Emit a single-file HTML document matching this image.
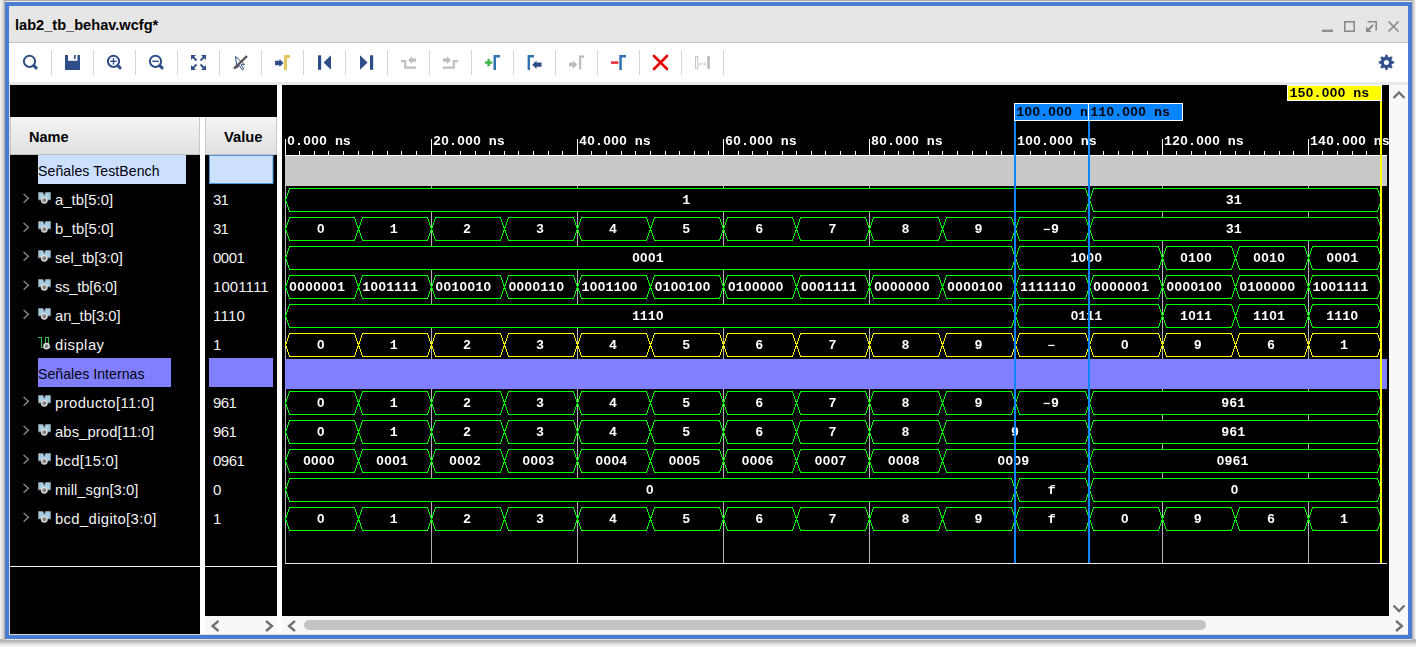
<!DOCTYPE html><html><head><meta charset="utf-8"><style>html,body{margin:0;padding:0;overflow:hidden;background:#fff}svg{display:block}text{white-space:pre}</style></head><body><svg width="1416" height="647" viewBox="0 0 1416 647"><rect x="0" y="0" width="1416" height="647" fill="#ffffff"/>
<defs><linearGradient id="shL" x1="0" x2="1" y1="0" y2="0"><stop offset="0" stop-color="#f2f2f2"/><stop offset="0.45" stop-color="#e0e0e0"/><stop offset="1" stop-color="#bcbcbc"/></linearGradient><linearGradient id="shR" x1="0" x2="1" y1="0" y2="0"><stop offset="0" stop-color="#a8a8a8"/><stop offset="0.5" stop-color="#d8d8d8"/><stop offset="1" stop-color="#f8f8f8"/></linearGradient><linearGradient id="shB" x1="0" x2="0" y1="0" y2="1"><stop offset="0" stop-color="#bcbcbc"/><stop offset="0.25" stop-color="#b0b0b0"/><stop offset="0.6" stop-color="#dedede"/><stop offset="1" stop-color="#f8f8f8"/></linearGradient><filter id="gs" x="-0.05" y="-0.05" width="1.1" height="1.1"><feOffset dx="0" dy="0"/></filter><linearGradient id="hdr" x1="0" x2="0" y1="0" y2="1"><stop offset="0" stop-color="#f4f4f4"/><stop offset="1" stop-color="#e0e0e0"/></linearGradient></defs>
<rect x="0" y="0" width="5" height="641" fill="url(#shL)"/>
<rect x="4" y="0" width="1410" height="1" fill="#a8a8a8"/>
<rect x="4" y="1" width="1408" height="1" fill="#f0ede6"/>
<rect x="4" y="1" width="1" height="639" fill="#b4b0a6"/>
<rect x="1412" y="0" width="4" height="641" fill="url(#shR)"/>
<rect x="0" y="639" width="1416" height="8" fill="url(#shB)"/>
<rect x="5" y="639" width="1407" height="1" fill="#e8e4dc"/>
<rect x="5" y="2" width="1407" height="637" fill="#4a7dd1"/>
<rect x="9" y="6" width="1399" height="629" fill="#e8e8e8"/>
<rect x="9" y="6" width="1399" height="36" fill="#e6e6e6"/>
<rect x="9" y="42" width="1399" height="1" fill="#c2c2c2"/>
<text x="15" y="30" font-family="Liberation Sans" font-weight="bold" font-size="14.6" fill="#000">lab2_tb_behav.wcfg*</text>
<g stroke="#8a8a8a" fill="none" stroke-width="1.6"><line x1="1322" y1="30.8" x2="1333" y2="30.8" stroke-width="2.2"/><rect x="1344.8" y="21.8" width="9.4" height="9.4"/><polyline points="1367.5,21.8 1376.2,21.8 1376.2,30.6"/><line x1="1373" y1="25" x2="1367.5" y2="30.5" stroke-width="2"/><line x1="1388.5" y1="21.5" x2="1398.5" y2="31.5"/><line x1="1398.5" y1="21.5" x2="1388.5" y2="31.5"/></g><polygon points="1366,32 1366,26.5 1371.5,32" fill="#8a8a8a"/>
<rect x="9" y="43" width="1399" height="39" fill="#ffffff"/>
<rect x="9" y="82" width="1399" height="3" fill="#e9e9e9"/>
<rect x="51" y="50" width="1" height="25" fill="#d6d6d6"/>
<rect x="93" y="50" width="1" height="25" fill="#d6d6d6"/>
<rect x="135" y="50" width="1" height="25" fill="#d6d6d6"/>
<rect x="177" y="50" width="1" height="25" fill="#d6d6d6"/>
<rect x="219" y="50" width="1" height="25" fill="#d6d6d6"/>
<rect x="261" y="50" width="1" height="25" fill="#d6d6d6"/>
<rect x="303" y="50" width="1" height="25" fill="#d6d6d6"/>
<rect x="345" y="50" width="1" height="25" fill="#d6d6d6"/>
<rect x="387" y="50" width="1" height="25" fill="#d6d6d6"/>
<rect x="429" y="50" width="1" height="25" fill="#d6d6d6"/>
<rect x="471" y="50" width="1" height="25" fill="#d6d6d6"/>
<rect x="513" y="50" width="1" height="25" fill="#d6d6d6"/>
<rect x="555" y="50" width="1" height="25" fill="#d6d6d6"/>
<rect x="597" y="50" width="1" height="25" fill="#d6d6d6"/>
<rect x="639" y="50" width="1" height="25" fill="#d6d6d6"/>
<rect x="681" y="50" width="1" height="25" fill="#d6d6d6"/>
<rect x="723" y="50" width="1" height="25" fill="#d6d6d6"/>
<g fill="none" stroke="#2f4d88" stroke-width="2"><circle cx="29.5" cy="61.3" r="5.6"/></g><line x1="33.9" y1="65.7" x2="36.1" y2="67.9" stroke="#2f4d88" stroke-width="3" stroke-linecap="round"/>
<path d="M65 55 H80 V70 H65 Z" fill="#2f4d88"/><rect x="68" y="55" width="9.5" height="5.8" fill="#fff"/><rect x="74" y="55" width="1.6" height="4" fill="#2f4d88"/>
<g fill="none" stroke="#2f4d88" stroke-width="2"><circle cx="113.5" cy="61.3" r="5.6"/><line x1="110.3" y1="61.3" x2="116.7" y2="61.3" stroke-width="1.4"/><line x1="113.5" y1="58.1" x2="113.5" y2="64.5" stroke-width="1.4"/></g><line x1="117.9" y1="65.7" x2="120.1" y2="67.9" stroke="#2f4d88" stroke-width="3" stroke-linecap="round"/>
<g fill="none" stroke="#2f4d88" stroke-width="2"><circle cx="155.5" cy="61.3" r="5.6"/><line x1="152.3" y1="61.3" x2="158.7" y2="61.3" stroke-width="1.4"/></g><line x1="159.9" y1="65.7" x2="162.1" y2="67.9" stroke="#2f4d88" stroke-width="3" stroke-linecap="round"/>
<g fill="#2f4d88"><polygon points="191,55 196,55 191,60"/><polygon points="206,55 201,55 206,60"/><polygon points="191,70 196,70 191,65"/><polygon points="206,70 201,70 206,65"/></g><g stroke="#2f4d88" stroke-width="1.8"><line x1="193" y1="57" x2="196.5" y2="60.5"/><line x1="204" y1="57" x2="200.5" y2="60.5"/><line x1="193" y1="68" x2="196.5" y2="64.5"/><line x1="204" y1="68" x2="200.5" y2="64.5"/></g>
<path d="M235.5 56.5 L244.5 64.5 L241 64.8 L243.8 68.8 L242 69.6 L239.4 65.6 L237 68 Z" fill="none" stroke="#2f4d88" stroke-width="1"/><line x1="234" y1="68.6" x2="247" y2="56" stroke="#555555" stroke-width="2.4"/>
<polygon points="275,60.8 279.5,60.8 279.5,59 283.5,63 279.5,67 279.5,65.2 275,65.2" fill="#2f4d88"/><path d="M284 70 V55 H290 V58 H287 V70 Z" fill="#e6c65c"/>
<rect x="318" y="55.3" width="3.2" height="14.5" fill="#2f4d88"/><polygon points="331,55.3 331,69.8 323.6,62.5" fill="#2f4d88"/>
<polygon points="360,55.3 360,69.8 367.6,62.5" fill="#2f4d88"/><rect x="370" y="55.3" width="3.2" height="14.5" fill="#2f4d88"/>
<path d="M401 60 H406.3 V66.5 H416 V68.8 H404.2 V62.3 H401 Z" fill="#bdbdbd"/><polygon points="408,60.2 412,56.4 412,58.6 416,58.6 416,61.8 412,61.8 412,64" fill="#bdbdbd"/>
<path d="M458 60 H452.7 V66.5 H443 V68.8 H454.8 V62.3 H458 Z" fill="#bdbdbd"/><polygon points="451,60.2 447,56.4 447,58.6 443,58.6 443,61.8 447,61.8 447,64" fill="#bdbdbd"/>
<rect x="484.9" y="61.4" width="7.4" height="2.4" fill="#3cb44a"/><rect x="487.4" y="58.9" width="2.4" height="7.4" fill="#3cb44a"/><path d="M493.5 70 V55 H500 V57.5 H496 V70 Z" fill="#2f72b0"/>
<path d="M527.6 70 V55 H534 V57.5 H530 V70 Z" fill="#2f72b0"/><polygon points="532.3,64.7 536.5,60.4 536.5,62.6 541.5,62.6 541.5,66.8 536.5,66.8 536.5,69" fill="#2f4d88"/>
<polygon points="569,62.6 573,62.6 573,60.4 577.2,64.6 573,68.8 573,66.6 569,66.6" fill="#bdbdbd"/><path d="M579 69.5 V55.4 H584 V57.8 H581.2 V69.5 Z" fill="#bdbdbd"/>
<rect x="611" y="61.4" width="7.4" height="2.4" fill="#e8262b"/><path d="M619.3 70 V55 H626 V57.5 H621.8 V70 Z" fill="#2f72b0"/>
<g stroke="#e60000" stroke-width="2.6" stroke-linecap="round"><line x1="654" y1="56" x2="667" y2="69"/><line x1="667" y1="56" x2="654" y2="69"/></g>
<rect x="695.5" y="56.4" width="2.2" height="12" fill="none" stroke="#c4c4c4" stroke-width="1"/><rect x="707.2" y="56" width="2.7" height="12.8" fill="#bdbdbd"/><line x1="699" y1="64" x2="706" y2="64" stroke="#cfcfcf" stroke-width="1"/><polyline points="700.8,62.2 699,64 700.8,65.8" fill="none" stroke="#cfcfcf" stroke-width="1"/><polyline points="704.2,62.2 706,64 704.2,65.8" fill="none" stroke="#cfcfcf" stroke-width="1"/>
<polygon points="1384.69,57.72 1385.78,54.93 1387.12,54.93 1388.21,57.72 1388.48,57.50 1388.51,57.85 1391.26,56.64 1392.21,57.59 1391.00,60.34 1391.35,60.37 1391.13,60.64 1393.92,61.73 1393.92,63.07 1391.13,64.16 1391.35,64.43 1391.00,64.46 1392.21,67.21 1391.26,68.16 1388.51,66.95 1388.48,67.30 1388.21,67.08 1387.12,69.87 1385.78,69.87 1384.69,67.08 1384.42,67.30 1384.39,66.95 1381.64,68.16 1380.69,67.21 1381.90,64.46 1381.55,64.43 1381.77,64.16 1378.98,63.07 1378.98,61.73 1381.77,60.64 1381.55,60.37 1381.90,60.34 1380.69,57.59 1381.64,56.64 1384.39,57.85 1384.42,57.50" fill="#2f4d88" stroke="#2f4d88" stroke-width="0.6" stroke-linejoin="round"/><circle cx="1386.45" cy="62.4" r="2.5" fill="#fff"/>
<rect x="9" y="85" width="1" height="550" fill="#dcdcdc"/>
<rect x="10" y="85" width="267" height="549" fill="#000"/>
<rect x="9" y="634" width="1399" height="1" fill="#dcdcdc"/>
<rect x="200" y="117" width="5" height="517" fill="#fff"/>
<rect x="277" y="85" width="5" height="549" fill="#fff"/>
<rect x="10" y="117" width="190" height="38" fill="url(#hdr)"/><rect x="199" y="117" width="1" height="38" fill="#c8c8c8"/><rect x="10" y="117" width="1" height="38" fill="#c4c4c4"/>
<rect x="205" y="117" width="72" height="38" fill="url(#hdr)"/><rect x="205" y="117" width="1" height="38" fill="#c8c8c8"/><rect x="276" y="117" width="1" height="38" fill="#c8c8c8"/>
<rect x="10" y="154" width="190" height="1" fill="#c0c0c0"/><rect x="205" y="154" width="72" height="1" fill="#c0c0c0"/>
<text x="29" y="142" font-family="Liberation Sans" font-weight="bold" font-size="15" fill="#000" textLength="39.6" lengthAdjust="spacingAndGlyphs">Name</text>
<text x="224" y="142" font-family="Liberation Sans" font-weight="bold" font-size="15" fill="#000" textLength="38.6" lengthAdjust="spacingAndGlyphs">Value</text>
<rect x="38" y="155" width="148" height="29" fill="#cce0fb"/>
<rect x="209.5" y="155.5" width="63.5" height="28" fill="#cce0fb" stroke="#4b98e0" stroke-width="1"/>
<text x="38" y="175.8" font-family="Liberation Sans" font-size="14.1" fill="#000010" textLength="121.5" lengthAdjust="spacing">Señales TestBench</text>
<polyline points="23.6,193.9 28.4,198.3 23.6,202.7" fill="none" stroke="#8c8c8c" stroke-width="1.3"/>
<path d="M38.6 192.6 H43 L44.3 196 L45.6 192.6 H50.4 V199.8 H38.6 Z" fill="#a3cde3" stroke="#8c98a0" stroke-width="0.9"/>
<circle cx="44.3" cy="200.2" r="2.7" fill="#808080" stroke="#d8d8d8" stroke-width="1.5"/>
<text x="55" y="204.8" font-family="Liberation Sans" font-size="14.8" fill="#f2f2f2" textLength="58.2" lengthAdjust="spacing">a_tb[5:0]</text>
<text x="213" y="204.8" font-family="Liberation Sans" font-size="15" fill="#f2f2f2" textLength="15.9" lengthAdjust="spacing">31</text>
<polyline points="23.6,222.9 28.4,227.3 23.6,231.7" fill="none" stroke="#8c8c8c" stroke-width="1.3"/>
<path d="M38.6 221.6 H43 L44.3 225 L45.6 221.6 H50.4 V228.8 H38.6 Z" fill="#a3cde3" stroke="#8c98a0" stroke-width="0.9"/>
<circle cx="44.3" cy="229.2" r="2.7" fill="#808080" stroke="#d8d8d8" stroke-width="1.5"/>
<text x="55" y="233.8" font-family="Liberation Sans" font-size="14.8" fill="#f2f2f2" textLength="58.7" lengthAdjust="spacing">b_tb[5:0]</text>
<text x="213" y="233.8" font-family="Liberation Sans" font-size="15" fill="#f2f2f2" textLength="15.9" lengthAdjust="spacing">31</text>
<polyline points="23.6,251.9 28.4,256.3 23.6,260.7" fill="none" stroke="#8c8c8c" stroke-width="1.3"/>
<path d="M38.6 250.6 H43 L44.3 254 L45.6 250.6 H50.4 V257.8 H38.6 Z" fill="#a3cde3" stroke="#8c98a0" stroke-width="0.9"/>
<circle cx="44.3" cy="258.2" r="2.7" fill="#808080" stroke="#d8d8d8" stroke-width="1.5"/>
<text x="55" y="262.8" font-family="Liberation Sans" font-size="14.8" fill="#f2f2f2" textLength="67.8" lengthAdjust="spacing">sel_tb[3:0]</text>
<text x="213" y="262.8" font-family="Liberation Sans" font-size="15" fill="#f2f2f2" textLength="31.8" lengthAdjust="spacing">0001</text>
<polyline points="23.6,280.9 28.4,285.3 23.6,289.7" fill="none" stroke="#8c8c8c" stroke-width="1.3"/>
<path d="M38.6 279.6 H43 L44.3 283 L45.6 279.6 H50.4 V286.8 H38.6 Z" fill="#a3cde3" stroke="#8c98a0" stroke-width="0.9"/>
<circle cx="44.3" cy="287.2" r="2.7" fill="#808080" stroke="#d8d8d8" stroke-width="1.5"/>
<text x="55" y="291.8" font-family="Liberation Sans" font-size="14.8" fill="#f2f2f2" textLength="62.2" lengthAdjust="spacing">ss_tb[6:0]</text>
<text x="213" y="291.8" font-family="Liberation Sans" font-size="15" fill="#f2f2f2" textLength="55.6" lengthAdjust="spacing">1001111</text>
<polyline points="23.6,309.9 28.4,314.3 23.6,318.7" fill="none" stroke="#8c8c8c" stroke-width="1.3"/>
<path d="M38.6 308.6 H43 L44.3 312 L45.6 308.6 H50.4 V315.8 H38.6 Z" fill="#a3cde3" stroke="#8c98a0" stroke-width="0.9"/>
<circle cx="44.3" cy="316.2" r="2.7" fill="#808080" stroke="#d8d8d8" stroke-width="1.5"/>
<text x="55" y="320.8" font-family="Liberation Sans" font-size="14.8" fill="#f2f2f2" textLength="65.5" lengthAdjust="spacing">an_tb[3:0]</text>
<text x="213" y="320.8" font-family="Liberation Sans" font-size="15" fill="#f2f2f2" textLength="31.8" lengthAdjust="spacing">1110</text>
<polyline points="38,337.5 41.5,337.5 41.5,347.5 45.5,347.5 45.5,337.5 48.5,337.5 48.5,347.5 50.5,347.5" fill="none" stroke="#3cb44b" stroke-width="1.1"/>
<circle cx="46.5" cy="346.1" r="2.6" fill="#808080" stroke="#d8d8d8" stroke-width="1.5"/>
<text x="55" y="349.8" font-family="Liberation Sans" font-size="14.8" fill="#f2f2f2" textLength="49" lengthAdjust="spacing">display</text>
<text x="213" y="349.8" font-family="Liberation Sans" font-size="15" fill="#f2f2f2" textLength="8.0" lengthAdjust="spacing">1</text>
<rect x="38" y="358" width="133" height="29" fill="#8080ff"/>
<rect x="209" y="358" width="64" height="29" fill="#8080ff"/>
<text x="38" y="378.8" font-family="Liberation Sans" font-size="14.1" fill="#000010" textLength="106.5" lengthAdjust="spacing">Señales Internas</text>
<polyline points="23.6,396.9 28.4,401.3 23.6,405.7" fill="none" stroke="#8c8c8c" stroke-width="1.3"/>
<path d="M38.6 395.6 H43 L44.3 399 L45.6 395.6 H50.4 V402.8 H38.6 Z" fill="#a3cde3" stroke="#8c98a0" stroke-width="0.9"/>
<circle cx="44.3" cy="403.2" r="2.7" fill="#808080" stroke="#d8d8d8" stroke-width="1.5"/>
<text x="55" y="407.8" font-family="Liberation Sans" font-size="14.8" fill="#f2f2f2" textLength="99" lengthAdjust="spacing">producto[11:0]</text>
<text x="213" y="407.8" font-family="Liberation Sans" font-size="15" fill="#f2f2f2" textLength="23.9" lengthAdjust="spacing">961</text>
<polyline points="23.6,425.9 28.4,430.3 23.6,434.7" fill="none" stroke="#8c8c8c" stroke-width="1.3"/>
<path d="M38.6 424.6 H43 L44.3 428 L45.6 424.6 H50.4 V431.8 H38.6 Z" fill="#a3cde3" stroke="#8c98a0" stroke-width="0.9"/>
<circle cx="44.3" cy="432.2" r="2.7" fill="#808080" stroke="#d8d8d8" stroke-width="1.5"/>
<text x="55" y="436.8" font-family="Liberation Sans" font-size="14.8" fill="#f2f2f2" textLength="99" lengthAdjust="spacing">abs_prod[11:0]</text>
<text x="213" y="436.8" font-family="Liberation Sans" font-size="15" fill="#f2f2f2" textLength="23.9" lengthAdjust="spacing">961</text>
<polyline points="23.6,454.9 28.4,459.3 23.6,463.7" fill="none" stroke="#8c8c8c" stroke-width="1.3"/>
<path d="M38.6 453.6 H43 L44.3 457 L45.6 453.6 H50.4 V460.8 H38.6 Z" fill="#a3cde3" stroke="#8c98a0" stroke-width="0.9"/>
<circle cx="44.3" cy="461.2" r="2.7" fill="#808080" stroke="#d8d8d8" stroke-width="1.5"/>
<text x="55" y="465.8" font-family="Liberation Sans" font-size="14.8" fill="#f2f2f2" textLength="63.2" lengthAdjust="spacing">bcd[15:0]</text>
<text x="213" y="465.8" font-family="Liberation Sans" font-size="15" fill="#f2f2f2" textLength="31.8" lengthAdjust="spacing">0961</text>
<polyline points="23.6,483.9 28.4,488.3 23.6,492.7" fill="none" stroke="#8c8c8c" stroke-width="1.3"/>
<path d="M38.6 482.6 H43 L44.3 486 L45.6 482.6 H50.4 V489.8 H38.6 Z" fill="#a3cde3" stroke="#8c98a0" stroke-width="0.9"/>
<circle cx="44.3" cy="490.2" r="2.7" fill="#808080" stroke="#d8d8d8" stroke-width="1.5"/>
<text x="55" y="494.8" font-family="Liberation Sans" font-size="14.8" fill="#f2f2f2" textLength="83.4" lengthAdjust="spacing">mill_sgn[3:0]</text>
<text x="213" y="494.8" font-family="Liberation Sans" font-size="15" fill="#f2f2f2" textLength="8.0" lengthAdjust="spacing">0</text>
<polyline points="23.6,512.9 28.4,517.3 23.6,521.7" fill="none" stroke="#8c8c8c" stroke-width="1.3"/>
<path d="M38.6 511.6 H43 L44.3 515 L45.6 511.6 H50.4 V518.8 H38.6 Z" fill="#a3cde3" stroke="#8c98a0" stroke-width="0.9"/>
<circle cx="44.3" cy="519.2" r="2.7" fill="#808080" stroke="#d8d8d8" stroke-width="1.5"/>
<text x="55" y="523.8" font-family="Liberation Sans" font-size="14.8" fill="#f2f2f2" textLength="101.4" lengthAdjust="spacing">bcd_digito[3:0]</text>
<text x="213" y="523.8" font-family="Liberation Sans" font-size="15" fill="#f2f2f2" textLength="8.0" lengthAdjust="spacing">1</text>
<rect x="10" y="566" width="190" height="1" fill="#f0f0f0"/><rect x="205" y="566" width="72" height="1" fill="#f0f0f0"/>
<rect x="205" y="616" width="72" height="18" fill="#f8f8f8"/>
<polyline points="218.5,621 212.5,626 218.5,631" fill="none" stroke="#707070" stroke-width="2.3"/>
<polyline points="266,621 272,626 266,631" fill="none" stroke="#707070" stroke-width="2.3"/>
<rect x="282" y="85" width="1107" height="531" fill="#000"/>
<rect x="282" y="616" width="1126" height="18" fill="#f8f8f8"/>
<rect x="1389" y="85" width="19" height="531" fill="#f8f8f8"/>
<polyline points="295,621 289,626 295,631" fill="none" stroke="#707070" stroke-width="2.3"/>
<polyline points="1396,621 1402,626 1396,631" fill="none" stroke="#707070" stroke-width="2.3"/>
<rect x="304" y="620" width="902" height="10" rx="5" fill="#c4c4c4"/>
<polyline points="1393.5,98 1399,92.5 1404.5,98" fill="none" stroke="#707070" stroke-width="2.3"/>
<polyline points="1393.5,605.5 1399,611 1404.5,605.5" fill="none" stroke="#707070" stroke-width="2.3"/>
<svg x="282" y="85" width="1107" height="531" viewBox="282 85 1107 531" overflow="hidden"><rect x="285" y="156" width="1" height="407" fill="#b4b4b4"/><rect x="431" y="156" width="1" height="407" fill="#b4b4b4"/><rect x="577" y="156" width="1" height="407" fill="#b4b4b4"/><rect x="723" y="156" width="1" height="407" fill="#b4b4b4"/><rect x="869" y="156" width="1" height="407" fill="#b4b4b4"/><rect x="1015" y="156" width="1" height="407" fill="#b4b4b4"/><rect x="1162" y="156" width="1" height="407" fill="#b4b4b4"/><rect x="1308" y="156" width="1" height="407" fill="#b4b4b4"/><rect x="285" y="156" width="1102" height="30" fill="#c8c8c8"/><rect x="285" y="359" width="1102" height="30" fill="#8080ff"/><rect x="285" y="155" width="1102" height="1" fill="#fff"/><rect x="285" y="139" width="1" height="16" fill="#fff"/><rect x="299" y="151" width="1" height="4" fill="#fff"/><rect x="314" y="151" width="1" height="4" fill="#fff"/><rect x="328" y="151" width="1" height="4" fill="#fff"/><rect x="343" y="151" width="1" height="4" fill="#fff"/><rect x="358" y="151" width="1" height="4" fill="#fff"/><rect x="372" y="151" width="1" height="4" fill="#fff"/><rect x="387" y="151" width="1" height="4" fill="#fff"/><rect x="401" y="151" width="1" height="4" fill="#fff"/><rect x="416" y="151" width="1" height="4" fill="#fff"/><rect x="431" y="139" width="1" height="16" fill="#fff"/><rect x="445" y="151" width="1" height="4" fill="#fff"/><rect x="460" y="151" width="1" height="4" fill="#fff"/><rect x="475" y="151" width="1" height="4" fill="#fff"/><rect x="489" y="151" width="1" height="4" fill="#fff"/><rect x="504" y="151" width="1" height="4" fill="#fff"/><rect x="518" y="151" width="1" height="4" fill="#fff"/><rect x="533" y="151" width="1" height="4" fill="#fff"/><rect x="548" y="151" width="1" height="4" fill="#fff"/><rect x="562" y="151" width="1" height="4" fill="#fff"/><rect x="577" y="139" width="1" height="16" fill="#fff"/><rect x="591" y="151" width="1" height="4" fill="#fff"/><rect x="606" y="151" width="1" height="4" fill="#fff"/><rect x="621" y="151" width="1" height="4" fill="#fff"/><rect x="635" y="151" width="1" height="4" fill="#fff"/><rect x="650" y="151" width="1" height="4" fill="#fff"/><rect x="665" y="151" width="1" height="4" fill="#fff"/><rect x="679" y="151" width="1" height="4" fill="#fff"/><rect x="694" y="151" width="1" height="4" fill="#fff"/><rect x="708" y="151" width="1" height="4" fill="#fff"/><rect x="723" y="139" width="1" height="16" fill="#fff"/><rect x="738" y="151" width="1" height="4" fill="#fff"/><rect x="752" y="151" width="1" height="4" fill="#fff"/><rect x="767" y="151" width="1" height="4" fill="#fff"/><rect x="782" y="151" width="1" height="4" fill="#fff"/><rect x="796" y="151" width="1" height="4" fill="#fff"/><rect x="811" y="151" width="1" height="4" fill="#fff"/><rect x="825" y="151" width="1" height="4" fill="#fff"/><rect x="840" y="151" width="1" height="4" fill="#fff"/><rect x="855" y="151" width="1" height="4" fill="#fff"/><rect x="869" y="139" width="1" height="16" fill="#fff"/><rect x="884" y="151" width="1" height="4" fill="#fff"/><rect x="898" y="151" width="1" height="4" fill="#fff"/><rect x="913" y="151" width="1" height="4" fill="#fff"/><rect x="928" y="151" width="1" height="4" fill="#fff"/><rect x="942" y="151" width="1" height="4" fill="#fff"/><rect x="957" y="151" width="1" height="4" fill="#fff"/><rect x="972" y="151" width="1" height="4" fill="#fff"/><rect x="986" y="151" width="1" height="4" fill="#fff"/><rect x="1001" y="151" width="1" height="4" fill="#fff"/><rect x="1015" y="139" width="1" height="16" fill="#fff"/><rect x="1030" y="151" width="1" height="4" fill="#fff"/><rect x="1045" y="151" width="1" height="4" fill="#fff"/><rect x="1059" y="151" width="1" height="4" fill="#fff"/><rect x="1074" y="151" width="1" height="4" fill="#fff"/><rect x="1089" y="151" width="1" height="4" fill="#fff"/><rect x="1103" y="151" width="1" height="4" fill="#fff"/><rect x="1118" y="151" width="1" height="4" fill="#fff"/><rect x="1132" y="151" width="1" height="4" fill="#fff"/><rect x="1147" y="151" width="1" height="4" fill="#fff"/><rect x="1162" y="139" width="1" height="16" fill="#fff"/><rect x="1176" y="151" width="1" height="4" fill="#fff"/><rect x="1191" y="151" width="1" height="4" fill="#fff"/><rect x="1205" y="151" width="1" height="4" fill="#fff"/><rect x="1220" y="151" width="1" height="4" fill="#fff"/><rect x="1235" y="151" width="1" height="4" fill="#fff"/><rect x="1249" y="151" width="1" height="4" fill="#fff"/><rect x="1264" y="151" width="1" height="4" fill="#fff"/><rect x="1279" y="151" width="1" height="4" fill="#fff"/><rect x="1293" y="151" width="1" height="4" fill="#fff"/><rect x="1308" y="139" width="1" height="16" fill="#fff"/><rect x="1322" y="151" width="1" height="4" fill="#fff"/><rect x="1337" y="151" width="1" height="4" fill="#fff"/><rect x="1352" y="151" width="1" height="4" fill="#fff"/><rect x="1366" y="151" width="1" height="4" fill="#fff"/><rect x="1381" y="151" width="1" height="4" fill="#fff"/><text x="287" y="145" font-family="Liberation Mono" font-weight="bold" font-size="13.3" filter="url(#gs)" fill="#fff">0.000 ns</text><rect x="290.0" y="140.0" width="2" height="2" fill="#000"/><rect x="306.0" y="140.0" width="2" height="2" fill="#000"/><rect x="314.0" y="140.0" width="2" height="2" fill="#000"/><rect x="322.0" y="140.0" width="2" height="2" fill="#000"/><text x="433" y="145" font-family="Liberation Mono" font-weight="bold" font-size="13.3" filter="url(#gs)" fill="#fff">20.000 ns</text><rect x="444.0" y="140.0" width="2" height="2" fill="#000"/><rect x="460.0" y="140.0" width="2" height="2" fill="#000"/><rect x="468.0" y="140.0" width="2" height="2" fill="#000"/><rect x="476.0" y="140.0" width="2" height="2" fill="#000"/><text x="579" y="145" font-family="Liberation Mono" font-weight="bold" font-size="13.3" filter="url(#gs)" fill="#fff">40.000 ns</text><rect x="590.0" y="140.0" width="2" height="2" fill="#000"/><rect x="606.0" y="140.0" width="2" height="2" fill="#000"/><rect x="614.0" y="140.0" width="2" height="2" fill="#000"/><rect x="622.0" y="140.0" width="2" height="2" fill="#000"/><text x="725" y="145" font-family="Liberation Mono" font-weight="bold" font-size="13.3" filter="url(#gs)" fill="#fff">60.000 ns</text><rect x="736.0" y="140.0" width="2" height="2" fill="#000"/><rect x="752.0" y="140.0" width="2" height="2" fill="#000"/><rect x="760.0" y="140.0" width="2" height="2" fill="#000"/><rect x="768.0" y="140.0" width="2" height="2" fill="#000"/><text x="871" y="145" font-family="Liberation Mono" font-weight="bold" font-size="13.3" filter="url(#gs)" fill="#fff">80.000 ns</text><rect x="882.0" y="140.0" width="2" height="2" fill="#000"/><rect x="898.0" y="140.0" width="2" height="2" fill="#000"/><rect x="906.0" y="140.0" width="2" height="2" fill="#000"/><rect x="914.0" y="140.0" width="2" height="2" fill="#000"/><text x="1017" y="145" font-family="Liberation Mono" font-weight="bold" font-size="13.3" filter="url(#gs)" fill="#fff">100.000 ns</text><rect x="1028.0" y="140.0" width="2" height="2" fill="#000"/><rect x="1036.0" y="140.0" width="2" height="2" fill="#000"/><rect x="1052.0" y="140.0" width="2" height="2" fill="#000"/><rect x="1060.0" y="140.0" width="2" height="2" fill="#000"/><rect x="1068.0" y="140.0" width="2" height="2" fill="#000"/><text x="1164" y="145" font-family="Liberation Mono" font-weight="bold" font-size="13.3" filter="url(#gs)" fill="#fff">120.000 ns</text><rect x="1183.0" y="140.0" width="2" height="2" fill="#000"/><rect x="1199.0" y="140.0" width="2" height="2" fill="#000"/><rect x="1207.0" y="140.0" width="2" height="2" fill="#000"/><rect x="1215.0" y="140.0" width="2" height="2" fill="#000"/><text x="1310" y="145" font-family="Liberation Mono" font-weight="bold" font-size="13.3" filter="url(#gs)" fill="#fff">140.000 ns</text><rect x="1329.0" y="140.0" width="2" height="2" fill="#000"/><rect x="1345.0" y="140.0" width="2" height="2" fill="#000"/><rect x="1353.0" y="140.0" width="2" height="2" fill="#000"/><rect x="1361.0" y="140.0" width="2" height="2" fill="#000"/><path d="M285.5 200.0 L289.5 188.5 L1085.5 188.5 L1089.5 200.0 L1085.5 211.5 L289.5 211.5 Z M1089.5 200.0 L1093.5 188.5 L1377.5 188.5 L1381.5 200.0 L1377.5 211.5 L1093.5 211.5 Z" fill="#000" stroke="#00ff00" stroke-width="1" shape-rendering="crispEdges"/><path d="M285.5 229.0 L289.5 217.5 L354.5 217.5 L358.5 229.0 L354.5 240.5 L289.5 240.5 Z M358.5 229.0 L362.5 217.5 L427.5 217.5 L431.5 229.0 L427.5 240.5 L362.5 240.5 Z M431.5 229.0 L435.5 217.5 L500.5 217.5 L504.5 229.0 L500.5 240.5 L435.5 240.5 Z M504.5 229.0 L508.5 217.5 L573.5 217.5 L577.5 229.0 L573.5 240.5 L508.5 240.5 Z M577.5 229.0 L581.5 217.5 L646.5 217.5 L650.5 229.0 L646.5 240.5 L581.5 240.5 Z M650.5 229.0 L654.5 217.5 L719.5 217.5 L723.5 229.0 L719.5 240.5 L654.5 240.5 Z M723.5 229.0 L727.5 217.5 L792.5 217.5 L796.5 229.0 L792.5 240.5 L727.5 240.5 Z M796.5 229.0 L800.5 217.5 L865.5 217.5 L869.5 229.0 L865.5 240.5 L800.5 240.5 Z M869.5 229.0 L873.5 217.5 L938.5 217.5 L942.5 229.0 L938.5 240.5 L873.5 240.5 Z M942.5 229.0 L946.5 217.5 L1011.5 217.5 L1015.5 229.0 L1011.5 240.5 L946.5 240.5 Z M1015.5 229.0 L1019.5 217.5 L1085.5 217.5 L1089.5 229.0 L1085.5 240.5 L1019.5 240.5 Z M1089.5 229.0 L1093.5 217.5 L1377.5 217.5 L1381.5 229.0 L1377.5 240.5 L1093.5 240.5 Z" fill="#000" stroke="#00ff00" stroke-width="1" shape-rendering="crispEdges"/><path d="M285.5 258.0 L289.5 246.5 L1011.5 246.5 L1015.5 258.0 L1011.5 269.5 L289.5 269.5 Z M1015.5 258.0 L1019.5 246.5 L1158.5 246.5 L1162.5 258.0 L1158.5 269.5 L1019.5 269.5 Z M1162.5 258.0 L1166.5 246.5 L1231.5 246.5 L1235.5 258.0 L1231.5 269.5 L1166.5 269.5 Z M1235.5 258.0 L1239.5 246.5 L1304.5 246.5 L1308.5 258.0 L1304.5 269.5 L1239.5 269.5 Z M1308.5 258.0 L1312.5 246.5 L1377.5 246.5 L1381.5 258.0 L1377.5 269.5 L1312.5 269.5 Z" fill="#000" stroke="#00ff00" stroke-width="1" shape-rendering="crispEdges"/><path d="M285.5 287.0 L289.5 275.5 L354.5 275.5 L358.5 287.0 L354.5 298.5 L289.5 298.5 Z M358.5 287.0 L362.5 275.5 L427.5 275.5 L431.5 287.0 L427.5 298.5 L362.5 298.5 Z M431.5 287.0 L435.5 275.5 L500.5 275.5 L504.5 287.0 L500.5 298.5 L435.5 298.5 Z M504.5 287.0 L508.5 275.5 L573.5 275.5 L577.5 287.0 L573.5 298.5 L508.5 298.5 Z M577.5 287.0 L581.5 275.5 L646.5 275.5 L650.5 287.0 L646.5 298.5 L581.5 298.5 Z M650.5 287.0 L654.5 275.5 L719.5 275.5 L723.5 287.0 L719.5 298.5 L654.5 298.5 Z M723.5 287.0 L727.5 275.5 L792.5 275.5 L796.5 287.0 L792.5 298.5 L727.5 298.5 Z M796.5 287.0 L800.5 275.5 L865.5 275.5 L869.5 287.0 L865.5 298.5 L800.5 298.5 Z M869.5 287.0 L873.5 275.5 L938.5 275.5 L942.5 287.0 L938.5 298.5 L873.5 298.5 Z M942.5 287.0 L946.5 275.5 L1011.5 275.5 L1015.5 287.0 L1011.5 298.5 L946.5 298.5 Z M1015.5 287.0 L1019.5 275.5 L1085.5 275.5 L1089.5 287.0 L1085.5 298.5 L1019.5 298.5 Z M1089.5 287.0 L1093.5 275.5 L1158.5 275.5 L1162.5 287.0 L1158.5 298.5 L1093.5 298.5 Z M1162.5 287.0 L1166.5 275.5 L1231.5 275.5 L1235.5 287.0 L1231.5 298.5 L1166.5 298.5 Z M1235.5 287.0 L1239.5 275.5 L1304.5 275.5 L1308.5 287.0 L1304.5 298.5 L1239.5 298.5 Z M1308.5 287.0 L1312.5 275.5 L1377.5 275.5 L1381.5 287.0 L1377.5 298.5 L1312.5 298.5 Z" fill="#000" stroke="#00ff00" stroke-width="1" shape-rendering="crispEdges"/><path d="M285.5 316.0 L289.5 304.5 L1011.5 304.5 L1015.5 316.0 L1011.5 327.5 L289.5 327.5 Z M1015.5 316.0 L1019.5 304.5 L1158.5 304.5 L1162.5 316.0 L1158.5 327.5 L1019.5 327.5 Z M1162.5 316.0 L1166.5 304.5 L1231.5 304.5 L1235.5 316.0 L1231.5 327.5 L1166.5 327.5 Z M1235.5 316.0 L1239.5 304.5 L1304.5 304.5 L1308.5 316.0 L1304.5 327.5 L1239.5 327.5 Z M1308.5 316.0 L1312.5 304.5 L1377.5 304.5 L1381.5 316.0 L1377.5 327.5 L1312.5 327.5 Z" fill="#000" stroke="#00ff00" stroke-width="1" shape-rendering="crispEdges"/><path d="M285.5 345.0 L289.5 333.5 L354.5 333.5 L358.5 345.0 L354.5 356.5 L289.5 356.5 Z M358.5 345.0 L362.5 333.5 L427.5 333.5 L431.5 345.0 L427.5 356.5 L362.5 356.5 Z M431.5 345.0 L435.5 333.5 L500.5 333.5 L504.5 345.0 L500.5 356.5 L435.5 356.5 Z M504.5 345.0 L508.5 333.5 L573.5 333.5 L577.5 345.0 L573.5 356.5 L508.5 356.5 Z M577.5 345.0 L581.5 333.5 L646.5 333.5 L650.5 345.0 L646.5 356.5 L581.5 356.5 Z M650.5 345.0 L654.5 333.5 L719.5 333.5 L723.5 345.0 L719.5 356.5 L654.5 356.5 Z M723.5 345.0 L727.5 333.5 L792.5 333.5 L796.5 345.0 L792.5 356.5 L727.5 356.5 Z M796.5 345.0 L800.5 333.5 L865.5 333.5 L869.5 345.0 L865.5 356.5 L800.5 356.5 Z M869.5 345.0 L873.5 333.5 L938.5 333.5 L942.5 345.0 L938.5 356.5 L873.5 356.5 Z M942.5 345.0 L946.5 333.5 L1011.5 333.5 L1015.5 345.0 L1011.5 356.5 L946.5 356.5 Z M1015.5 345.0 L1019.5 333.5 L1085.5 333.5 L1089.5 345.0 L1085.5 356.5 L1019.5 356.5 Z M1089.5 345.0 L1093.5 333.5 L1158.5 333.5 L1162.5 345.0 L1158.5 356.5 L1093.5 356.5 Z M1162.5 345.0 L1166.5 333.5 L1231.5 333.5 L1235.5 345.0 L1231.5 356.5 L1166.5 356.5 Z M1235.5 345.0 L1239.5 333.5 L1304.5 333.5 L1308.5 345.0 L1304.5 356.5 L1239.5 356.5 Z M1308.5 345.0 L1312.5 333.5 L1377.5 333.5 L1381.5 345.0 L1377.5 356.5 L1312.5 356.5 Z" fill="#000" stroke="#ffff00" stroke-width="1" shape-rendering="crispEdges"/><path d="M285.5 403.0 L289.5 391.5 L354.5 391.5 L358.5 403.0 L354.5 414.5 L289.5 414.5 Z M358.5 403.0 L362.5 391.5 L427.5 391.5 L431.5 403.0 L427.5 414.5 L362.5 414.5 Z M431.5 403.0 L435.5 391.5 L500.5 391.5 L504.5 403.0 L500.5 414.5 L435.5 414.5 Z M504.5 403.0 L508.5 391.5 L573.5 391.5 L577.5 403.0 L573.5 414.5 L508.5 414.5 Z M577.5 403.0 L581.5 391.5 L646.5 391.5 L650.5 403.0 L646.5 414.5 L581.5 414.5 Z M650.5 403.0 L654.5 391.5 L719.5 391.5 L723.5 403.0 L719.5 414.5 L654.5 414.5 Z M723.5 403.0 L727.5 391.5 L792.5 391.5 L796.5 403.0 L792.5 414.5 L727.5 414.5 Z M796.5 403.0 L800.5 391.5 L865.5 391.5 L869.5 403.0 L865.5 414.5 L800.5 414.5 Z M869.5 403.0 L873.5 391.5 L938.5 391.5 L942.5 403.0 L938.5 414.5 L873.5 414.5 Z M942.5 403.0 L946.5 391.5 L1011.5 391.5 L1015.5 403.0 L1011.5 414.5 L946.5 414.5 Z M1015.5 403.0 L1019.5 391.5 L1085.5 391.5 L1089.5 403.0 L1085.5 414.5 L1019.5 414.5 Z M1089.5 403.0 L1093.5 391.5 L1377.5 391.5 L1381.5 403.0 L1377.5 414.5 L1093.5 414.5 Z" fill="#000" stroke="#00ff00" stroke-width="1" shape-rendering="crispEdges"/><path d="M285.5 432.0 L289.5 420.5 L354.5 420.5 L358.5 432.0 L354.5 443.5 L289.5 443.5 Z M358.5 432.0 L362.5 420.5 L427.5 420.5 L431.5 432.0 L427.5 443.5 L362.5 443.5 Z M431.5 432.0 L435.5 420.5 L500.5 420.5 L504.5 432.0 L500.5 443.5 L435.5 443.5 Z M504.5 432.0 L508.5 420.5 L573.5 420.5 L577.5 432.0 L573.5 443.5 L508.5 443.5 Z M577.5 432.0 L581.5 420.5 L646.5 420.5 L650.5 432.0 L646.5 443.5 L581.5 443.5 Z M650.5 432.0 L654.5 420.5 L719.5 420.5 L723.5 432.0 L719.5 443.5 L654.5 443.5 Z M723.5 432.0 L727.5 420.5 L792.5 420.5 L796.5 432.0 L792.5 443.5 L727.5 443.5 Z M796.5 432.0 L800.5 420.5 L865.5 420.5 L869.5 432.0 L865.5 443.5 L800.5 443.5 Z M869.5 432.0 L873.5 420.5 L938.5 420.5 L942.5 432.0 L938.5 443.5 L873.5 443.5 Z M942.5 432.0 L946.5 420.5 L1085.5 420.5 L1089.5 432.0 L1085.5 443.5 L946.5 443.5 Z M1089.5 432.0 L1093.5 420.5 L1377.5 420.5 L1381.5 432.0 L1377.5 443.5 L1093.5 443.5 Z" fill="#000" stroke="#00ff00" stroke-width="1" shape-rendering="crispEdges"/><path d="M285.5 461.0 L289.5 449.5 L354.5 449.5 L358.5 461.0 L354.5 472.5 L289.5 472.5 Z M358.5 461.0 L362.5 449.5 L427.5 449.5 L431.5 461.0 L427.5 472.5 L362.5 472.5 Z M431.5 461.0 L435.5 449.5 L500.5 449.5 L504.5 461.0 L500.5 472.5 L435.5 472.5 Z M504.5 461.0 L508.5 449.5 L573.5 449.5 L577.5 461.0 L573.5 472.5 L508.5 472.5 Z M577.5 461.0 L581.5 449.5 L646.5 449.5 L650.5 461.0 L646.5 472.5 L581.5 472.5 Z M650.5 461.0 L654.5 449.5 L719.5 449.5 L723.5 461.0 L719.5 472.5 L654.5 472.5 Z M723.5 461.0 L727.5 449.5 L792.5 449.5 L796.5 461.0 L792.5 472.5 L727.5 472.5 Z M796.5 461.0 L800.5 449.5 L865.5 449.5 L869.5 461.0 L865.5 472.5 L800.5 472.5 Z M869.5 461.0 L873.5 449.5 L938.5 449.5 L942.5 461.0 L938.5 472.5 L873.5 472.5 Z M942.5 461.0 L946.5 449.5 L1085.5 449.5 L1089.5 461.0 L1085.5 472.5 L946.5 472.5 Z M1089.5 461.0 L1093.5 449.5 L1377.5 449.5 L1381.5 461.0 L1377.5 472.5 L1093.5 472.5 Z" fill="#000" stroke="#00ff00" stroke-width="1" shape-rendering="crispEdges"/><path d="M285.5 490.0 L289.5 478.5 L1011.5 478.5 L1015.5 490.0 L1011.5 501.5 L289.5 501.5 Z M1015.5 490.0 L1019.5 478.5 L1085.5 478.5 L1089.5 490.0 L1085.5 501.5 L1019.5 501.5 Z M1089.5 490.0 L1093.5 478.5 L1377.5 478.5 L1381.5 490.0 L1377.5 501.5 L1093.5 501.5 Z" fill="#000" stroke="#00ff00" stroke-width="1" shape-rendering="crispEdges"/><path d="M285.5 519.0 L289.5 507.5 L354.5 507.5 L358.5 519.0 L354.5 530.5 L289.5 530.5 Z M358.5 519.0 L362.5 507.5 L427.5 507.5 L431.5 519.0 L427.5 530.5 L362.5 530.5 Z M431.5 519.0 L435.5 507.5 L500.5 507.5 L504.5 519.0 L500.5 530.5 L435.5 530.5 Z M504.5 519.0 L508.5 507.5 L573.5 507.5 L577.5 519.0 L573.5 530.5 L508.5 530.5 Z M577.5 519.0 L581.5 507.5 L646.5 507.5 L650.5 519.0 L646.5 530.5 L581.5 530.5 Z M650.5 519.0 L654.5 507.5 L719.5 507.5 L723.5 519.0 L719.5 530.5 L654.5 530.5 Z M723.5 519.0 L727.5 507.5 L792.5 507.5 L796.5 519.0 L792.5 530.5 L727.5 530.5 Z M796.5 519.0 L800.5 507.5 L865.5 507.5 L869.5 519.0 L865.5 530.5 L800.5 530.5 Z M869.5 519.0 L873.5 507.5 L938.5 507.5 L942.5 519.0 L938.5 530.5 L873.5 530.5 Z M942.5 519.0 L946.5 507.5 L1011.5 507.5 L1015.5 519.0 L1011.5 530.5 L946.5 530.5 Z M1015.5 519.0 L1019.5 507.5 L1085.5 507.5 L1089.5 519.0 L1085.5 530.5 L1019.5 530.5 Z M1089.5 519.0 L1093.5 507.5 L1158.5 507.5 L1162.5 519.0 L1158.5 530.5 L1093.5 530.5 Z M1162.5 519.0 L1166.5 507.5 L1231.5 507.5 L1235.5 519.0 L1231.5 530.5 L1166.5 530.5 Z M1235.5 519.0 L1239.5 507.5 L1304.5 507.5 L1308.5 519.0 L1304.5 530.5 L1239.5 530.5 Z M1308.5 519.0 L1312.5 507.5 L1377.5 507.5 L1381.5 519.0 L1377.5 530.5 L1312.5 530.5 Z" fill="#000" stroke="#00ff00" stroke-width="1" shape-rendering="crispEdges"/><g filter="url(#gs)"><text x="682.2" y="204.0" font-family="Liberation Mono" font-weight="bold" font-size="13.3" fill="#fff">1</text><text x="1225.8" y="204.0" font-family="Liberation Mono" font-weight="bold" font-size="13.3" fill="#fff">31</text><text x="316.7" y="233.0" font-family="Liberation Mono" font-weight="bold" font-size="13.3" fill="#fff">0</text><text x="389.8" y="233.0" font-family="Liberation Mono" font-weight="bold" font-size="13.3" fill="#fff">1</text><text x="462.9" y="233.0" font-family="Liberation Mono" font-weight="bold" font-size="13.3" fill="#fff">2</text><text x="536.0" y="233.0" font-family="Liberation Mono" font-weight="bold" font-size="13.3" fill="#fff">3</text><text x="609.1" y="233.0" font-family="Liberation Mono" font-weight="bold" font-size="13.3" fill="#fff">4</text><text x="682.2" y="233.0" font-family="Liberation Mono" font-weight="bold" font-size="13.3" fill="#fff">5</text><text x="755.3" y="233.0" font-family="Liberation Mono" font-weight="bold" font-size="13.3" fill="#fff">6</text><text x="828.4" y="233.0" font-family="Liberation Mono" font-weight="bold" font-size="13.3" fill="#fff">7</text><text x="901.5" y="233.0" font-family="Liberation Mono" font-weight="bold" font-size="13.3" fill="#fff">8</text><text x="974.6" y="233.0" font-family="Liberation Mono" font-weight="bold" font-size="13.3" fill="#fff">9</text><rect x="1043.7" y="228.8" width="6.2" height="1.3" fill="#fff"/><text x="1043.1" y="233.0" font-family="Liberation Mono" font-weight="bold" font-size="13.3" fill="#fff"> 9</text><text x="1225.8" y="233.0" font-family="Liberation Mono" font-weight="bold" font-size="13.3" fill="#fff">31</text><text x="631.9" y="262.0" font-family="Liberation Mono" font-weight="bold" font-size="13.3" fill="#fff">0001</text><text x="1070.4" y="262.0" font-family="Liberation Mono" font-weight="bold" font-size="13.3" fill="#fff">1000</text><text x="1180.0" y="262.0" font-family="Liberation Mono" font-weight="bold" font-size="13.3" fill="#fff">0100</text><text x="1253.1" y="262.0" font-family="Liberation Mono" font-weight="bold" font-size="13.3" fill="#fff">0010</text><text x="1326.2" y="262.0" font-family="Liberation Mono" font-weight="bold" font-size="13.3" fill="#fff">0001</text><text x="289.1" y="291.0" font-family="Liberation Mono" font-weight="bold" font-size="13.3" fill="#fff">0000001</text><text x="362.2" y="291.0" font-family="Liberation Mono" font-weight="bold" font-size="13.3" fill="#fff">1001111</text><text x="435.3" y="291.0" font-family="Liberation Mono" font-weight="bold" font-size="13.3" fill="#fff">0010010</text><text x="508.4" y="291.0" font-family="Liberation Mono" font-weight="bold" font-size="13.3" fill="#fff">0000110</text><text x="581.5" y="291.0" font-family="Liberation Mono" font-weight="bold" font-size="13.3" fill="#fff">1001100</text><text x="654.6" y="291.0" font-family="Liberation Mono" font-weight="bold" font-size="13.3" fill="#fff">0100100</text><text x="727.7" y="291.0" font-family="Liberation Mono" font-weight="bold" font-size="13.3" fill="#fff">0100000</text><text x="800.8" y="291.0" font-family="Liberation Mono" font-weight="bold" font-size="13.3" fill="#fff">0001111</text><text x="873.9" y="291.0" font-family="Liberation Mono" font-weight="bold" font-size="13.3" fill="#fff">0000000</text><text x="947.0" y="291.0" font-family="Liberation Mono" font-weight="bold" font-size="13.3" fill="#fff">0000100</text><text x="1020.1" y="291.0" font-family="Liberation Mono" font-weight="bold" font-size="13.3" fill="#fff">1111110</text><text x="1093.1" y="291.0" font-family="Liberation Mono" font-weight="bold" font-size="13.3" fill="#fff">0000001</text><text x="1166.2" y="291.0" font-family="Liberation Mono" font-weight="bold" font-size="13.3" fill="#fff">0000100</text><text x="1239.3" y="291.0" font-family="Liberation Mono" font-weight="bold" font-size="13.3" fill="#fff">0100000</text><text x="1312.4" y="291.0" font-family="Liberation Mono" font-weight="bold" font-size="13.3" fill="#fff">1001111</text><text x="631.9" y="320.0" font-family="Liberation Mono" font-weight="bold" font-size="13.3" fill="#fff">1110</text><text x="1070.4" y="320.0" font-family="Liberation Mono" font-weight="bold" font-size="13.3" fill="#fff">0111</text><text x="1180.0" y="320.0" font-family="Liberation Mono" font-weight="bold" font-size="13.3" fill="#fff">1011</text><text x="1253.1" y="320.0" font-family="Liberation Mono" font-weight="bold" font-size="13.3" fill="#fff">1101</text><text x="1326.2" y="320.0" font-family="Liberation Mono" font-weight="bold" font-size="13.3" fill="#fff">1110</text><text x="316.7" y="349.0" font-family="Liberation Mono" font-weight="bold" font-size="13.3" fill="#fff">0</text><text x="389.8" y="349.0" font-family="Liberation Mono" font-weight="bold" font-size="13.3" fill="#fff">1</text><text x="462.9" y="349.0" font-family="Liberation Mono" font-weight="bold" font-size="13.3" fill="#fff">2</text><text x="536.0" y="349.0" font-family="Liberation Mono" font-weight="bold" font-size="13.3" fill="#fff">3</text><text x="609.1" y="349.0" font-family="Liberation Mono" font-weight="bold" font-size="13.3" fill="#fff">4</text><text x="682.2" y="349.0" font-family="Liberation Mono" font-weight="bold" font-size="13.3" fill="#fff">5</text><text x="755.3" y="349.0" font-family="Liberation Mono" font-weight="bold" font-size="13.3" fill="#fff">6</text><text x="828.4" y="349.0" font-family="Liberation Mono" font-weight="bold" font-size="13.3" fill="#fff">7</text><text x="901.5" y="349.0" font-family="Liberation Mono" font-weight="bold" font-size="13.3" fill="#fff">8</text><text x="974.6" y="349.0" font-family="Liberation Mono" font-weight="bold" font-size="13.3" fill="#fff">9</text><rect x="1048.3" y="344.8" width="6.2" height="1.3" fill="#fff"/><text x="1047.7" y="349.0" font-family="Liberation Mono" font-weight="bold" font-size="13.3" fill="#fff"> </text><text x="1120.7" y="349.0" font-family="Liberation Mono" font-weight="bold" font-size="13.3" fill="#fff">0</text><text x="1193.8" y="349.0" font-family="Liberation Mono" font-weight="bold" font-size="13.3" fill="#fff">9</text><text x="1266.9" y="349.0" font-family="Liberation Mono" font-weight="bold" font-size="13.3" fill="#fff">6</text><text x="1340.0" y="349.0" font-family="Liberation Mono" font-weight="bold" font-size="13.3" fill="#fff">1</text><text x="316.7" y="407.0" font-family="Liberation Mono" font-weight="bold" font-size="13.3" fill="#fff">0</text><text x="389.8" y="407.0" font-family="Liberation Mono" font-weight="bold" font-size="13.3" fill="#fff">1</text><text x="462.9" y="407.0" font-family="Liberation Mono" font-weight="bold" font-size="13.3" fill="#fff">2</text><text x="536.0" y="407.0" font-family="Liberation Mono" font-weight="bold" font-size="13.3" fill="#fff">3</text><text x="609.1" y="407.0" font-family="Liberation Mono" font-weight="bold" font-size="13.3" fill="#fff">4</text><text x="682.2" y="407.0" font-family="Liberation Mono" font-weight="bold" font-size="13.3" fill="#fff">5</text><text x="755.3" y="407.0" font-family="Liberation Mono" font-weight="bold" font-size="13.3" fill="#fff">6</text><text x="828.4" y="407.0" font-family="Liberation Mono" font-weight="bold" font-size="13.3" fill="#fff">7</text><text x="901.5" y="407.0" font-family="Liberation Mono" font-weight="bold" font-size="13.3" fill="#fff">8</text><text x="974.6" y="407.0" font-family="Liberation Mono" font-weight="bold" font-size="13.3" fill="#fff">9</text><rect x="1043.7" y="402.8" width="6.2" height="1.3" fill="#fff"/><text x="1043.1" y="407.0" font-family="Liberation Mono" font-weight="bold" font-size="13.3" fill="#fff"> 9</text><text x="1221.2" y="407.0" font-family="Liberation Mono" font-weight="bold" font-size="13.3" fill="#fff">961</text><text x="316.7" y="436.0" font-family="Liberation Mono" font-weight="bold" font-size="13.3" fill="#fff">0</text><text x="389.8" y="436.0" font-family="Liberation Mono" font-weight="bold" font-size="13.3" fill="#fff">1</text><text x="462.9" y="436.0" font-family="Liberation Mono" font-weight="bold" font-size="13.3" fill="#fff">2</text><text x="536.0" y="436.0" font-family="Liberation Mono" font-weight="bold" font-size="13.3" fill="#fff">3</text><text x="609.1" y="436.0" font-family="Liberation Mono" font-weight="bold" font-size="13.3" fill="#fff">4</text><text x="682.2" y="436.0" font-family="Liberation Mono" font-weight="bold" font-size="13.3" fill="#fff">5</text><text x="755.3" y="436.0" font-family="Liberation Mono" font-weight="bold" font-size="13.3" fill="#fff">6</text><text x="828.4" y="436.0" font-family="Liberation Mono" font-weight="bold" font-size="13.3" fill="#fff">7</text><text x="901.5" y="436.0" font-family="Liberation Mono" font-weight="bold" font-size="13.3" fill="#fff">8</text><text x="1011.1" y="436.0" font-family="Liberation Mono" font-weight="bold" font-size="13.3" fill="#fff">9</text><text x="1221.2" y="436.0" font-family="Liberation Mono" font-weight="bold" font-size="13.3" fill="#fff">961</text><text x="302.9" y="465.0" font-family="Liberation Mono" font-weight="bold" font-size="13.3" fill="#fff">0000</text><text x="376.0" y="465.0" font-family="Liberation Mono" font-weight="bold" font-size="13.3" fill="#fff">0001</text><text x="449.1" y="465.0" font-family="Liberation Mono" font-weight="bold" font-size="13.3" fill="#fff">0002</text><text x="522.2" y="465.0" font-family="Liberation Mono" font-weight="bold" font-size="13.3" fill="#fff">0003</text><text x="595.3" y="465.0" font-family="Liberation Mono" font-weight="bold" font-size="13.3" fill="#fff">0004</text><text x="668.4" y="465.0" font-family="Liberation Mono" font-weight="bold" font-size="13.3" fill="#fff">0005</text><text x="741.5" y="465.0" font-family="Liberation Mono" font-weight="bold" font-size="13.3" fill="#fff">0006</text><text x="814.6" y="465.0" font-family="Liberation Mono" font-weight="bold" font-size="13.3" fill="#fff">0007</text><text x="887.7" y="465.0" font-family="Liberation Mono" font-weight="bold" font-size="13.3" fill="#fff">0008</text><text x="997.3" y="465.0" font-family="Liberation Mono" font-weight="bold" font-size="13.3" fill="#fff">0009</text><text x="1216.6" y="465.0" font-family="Liberation Mono" font-weight="bold" font-size="13.3" fill="#fff">0961</text><text x="645.7" y="494.0" font-family="Liberation Mono" font-weight="bold" font-size="13.3" fill="#fff">0</text><text x="1047.7" y="494.0" font-family="Liberation Mono" font-weight="bold" font-size="13.3" fill="#fff">f</text><text x="1230.4" y="494.0" font-family="Liberation Mono" font-weight="bold" font-size="13.3" fill="#fff">0</text><text x="316.7" y="523.0" font-family="Liberation Mono" font-weight="bold" font-size="13.3" fill="#fff">0</text><text x="389.8" y="523.0" font-family="Liberation Mono" font-weight="bold" font-size="13.3" fill="#fff">1</text><text x="462.9" y="523.0" font-family="Liberation Mono" font-weight="bold" font-size="13.3" fill="#fff">2</text><text x="536.0" y="523.0" font-family="Liberation Mono" font-weight="bold" font-size="13.3" fill="#fff">3</text><text x="609.1" y="523.0" font-family="Liberation Mono" font-weight="bold" font-size="13.3" fill="#fff">4</text><text x="682.2" y="523.0" font-family="Liberation Mono" font-weight="bold" font-size="13.3" fill="#fff">5</text><text x="755.3" y="523.0" font-family="Liberation Mono" font-weight="bold" font-size="13.3" fill="#fff">6</text><text x="828.4" y="523.0" font-family="Liberation Mono" font-weight="bold" font-size="13.3" fill="#fff">7</text><text x="901.5" y="523.0" font-family="Liberation Mono" font-weight="bold" font-size="13.3" fill="#fff">8</text><text x="974.6" y="523.0" font-family="Liberation Mono" font-weight="bold" font-size="13.3" fill="#fff">9</text><text x="1047.7" y="523.0" font-family="Liberation Mono" font-weight="bold" font-size="13.3" fill="#fff">f</text><text x="1120.7" y="523.0" font-family="Liberation Mono" font-weight="bold" font-size="13.3" fill="#fff">0</text><text x="1193.8" y="523.0" font-family="Liberation Mono" font-weight="bold" font-size="13.3" fill="#fff">9</text><text x="1266.9" y="523.0" font-family="Liberation Mono" font-weight="bold" font-size="13.3" fill="#fff">6</text><text x="1340.0" y="523.0" font-family="Liberation Mono" font-weight="bold" font-size="13.3" fill="#fff">1</text></g><rect x="319.7" y="228.0" width="2" height="2" fill="#000"/><rect x="634.9" y="257.0" width="2" height="2" fill="#000"/><rect x="642.9" y="257.0" width="2" height="2" fill="#000"/><rect x="650.9" y="257.0" width="2" height="2" fill="#000"/><rect x="1081.4" y="257.0" width="2" height="2" fill="#000"/><rect x="1089.4" y="257.0" width="2" height="2" fill="#000"/><rect x="1097.4" y="257.0" width="2" height="2" fill="#000"/><rect x="1183.0" y="257.0" width="2" height="2" fill="#000"/><rect x="1199.0" y="257.0" width="2" height="2" fill="#000"/><rect x="1207.0" y="257.0" width="2" height="2" fill="#000"/><rect x="1256.1" y="257.0" width="2" height="2" fill="#000"/><rect x="1264.1" y="257.0" width="2" height="2" fill="#000"/><rect x="1280.1" y="257.0" width="2" height="2" fill="#000"/><rect x="1329.2" y="257.0" width="2" height="2" fill="#000"/><rect x="1337.2" y="257.0" width="2" height="2" fill="#000"/><rect x="1345.2" y="257.0" width="2" height="2" fill="#000"/><rect x="292.1" y="286.0" width="2" height="2" fill="#000"/><rect x="300.1" y="286.0" width="2" height="2" fill="#000"/><rect x="308.1" y="286.0" width="2" height="2" fill="#000"/><rect x="316.1" y="286.0" width="2" height="2" fill="#000"/><rect x="324.1" y="286.0" width="2" height="2" fill="#000"/><rect x="332.1" y="286.0" width="2" height="2" fill="#000"/><rect x="373.2" y="286.0" width="2" height="2" fill="#000"/><rect x="381.2" y="286.0" width="2" height="2" fill="#000"/><rect x="438.3" y="286.0" width="2" height="2" fill="#000"/><rect x="446.3" y="286.0" width="2" height="2" fill="#000"/><rect x="462.3" y="286.0" width="2" height="2" fill="#000"/><rect x="470.3" y="286.0" width="2" height="2" fill="#000"/><rect x="486.3" y="286.0" width="2" height="2" fill="#000"/><rect x="511.4" y="286.0" width="2" height="2" fill="#000"/><rect x="519.4" y="286.0" width="2" height="2" fill="#000"/><rect x="527.4" y="286.0" width="2" height="2" fill="#000"/><rect x="535.4" y="286.0" width="2" height="2" fill="#000"/><rect x="559.4" y="286.0" width="2" height="2" fill="#000"/><rect x="592.5" y="286.0" width="2" height="2" fill="#000"/><rect x="600.5" y="286.0" width="2" height="2" fill="#000"/><rect x="624.5" y="286.0" width="2" height="2" fill="#000"/><rect x="632.5" y="286.0" width="2" height="2" fill="#000"/><rect x="657.6" y="286.0" width="2" height="2" fill="#000"/><rect x="673.6" y="286.0" width="2" height="2" fill="#000"/><rect x="681.6" y="286.0" width="2" height="2" fill="#000"/><rect x="697.6" y="286.0" width="2" height="2" fill="#000"/><rect x="705.6" y="286.0" width="2" height="2" fill="#000"/><rect x="730.7" y="286.0" width="2" height="2" fill="#000"/><rect x="746.7" y="286.0" width="2" height="2" fill="#000"/><rect x="754.7" y="286.0" width="2" height="2" fill="#000"/><rect x="762.7" y="286.0" width="2" height="2" fill="#000"/><rect x="770.7" y="286.0" width="2" height="2" fill="#000"/><rect x="778.7" y="286.0" width="2" height="2" fill="#000"/><rect x="803.8" y="286.0" width="2" height="2" fill="#000"/><rect x="811.8" y="286.0" width="2" height="2" fill="#000"/><rect x="819.8" y="286.0" width="2" height="2" fill="#000"/><rect x="876.9" y="286.0" width="2" height="2" fill="#000"/><rect x="884.9" y="286.0" width="2" height="2" fill="#000"/><rect x="892.9" y="286.0" width="2" height="2" fill="#000"/><rect x="900.9" y="286.0" width="2" height="2" fill="#000"/><rect x="908.9" y="286.0" width="2" height="2" fill="#000"/><rect x="916.9" y="286.0" width="2" height="2" fill="#000"/><rect x="924.9" y="286.0" width="2" height="2" fill="#000"/><rect x="950.0" y="286.0" width="2" height="2" fill="#000"/><rect x="958.0" y="286.0" width="2" height="2" fill="#000"/><rect x="966.0" y="286.0" width="2" height="2" fill="#000"/><rect x="974.0" y="286.0" width="2" height="2" fill="#000"/><rect x="990.0" y="286.0" width="2" height="2" fill="#000"/><rect x="998.0" y="286.0" width="2" height="2" fill="#000"/><rect x="1071.1" y="286.0" width="2" height="2" fill="#000"/><rect x="1096.1" y="286.0" width="2" height="2" fill="#000"/><rect x="1104.1" y="286.0" width="2" height="2" fill="#000"/><rect x="1112.1" y="286.0" width="2" height="2" fill="#000"/><rect x="1120.1" y="286.0" width="2" height="2" fill="#000"/><rect x="1128.1" y="286.0" width="2" height="2" fill="#000"/><rect x="1136.1" y="286.0" width="2" height="2" fill="#000"/><rect x="1169.2" y="286.0" width="2" height="2" fill="#000"/><rect x="1177.2" y="286.0" width="2" height="2" fill="#000"/><rect x="1185.2" y="286.0" width="2" height="2" fill="#000"/><rect x="1193.2" y="286.0" width="2" height="2" fill="#000"/><rect x="1209.2" y="286.0" width="2" height="2" fill="#000"/><rect x="1217.2" y="286.0" width="2" height="2" fill="#000"/><rect x="1242.3" y="286.0" width="2" height="2" fill="#000"/><rect x="1258.3" y="286.0" width="2" height="2" fill="#000"/><rect x="1266.3" y="286.0" width="2" height="2" fill="#000"/><rect x="1274.3" y="286.0" width="2" height="2" fill="#000"/><rect x="1282.3" y="286.0" width="2" height="2" fill="#000"/><rect x="1290.3" y="286.0" width="2" height="2" fill="#000"/><rect x="1323.4" y="286.0" width="2" height="2" fill="#000"/><rect x="1331.4" y="286.0" width="2" height="2" fill="#000"/><rect x="658.9" y="315.0" width="2" height="2" fill="#000"/><rect x="1073.4" y="315.0" width="2" height="2" fill="#000"/><rect x="1191.0" y="315.0" width="2" height="2" fill="#000"/><rect x="1272.1" y="315.0" width="2" height="2" fill="#000"/><rect x="1353.2" y="315.0" width="2" height="2" fill="#000"/><rect x="319.7" y="344.0" width="2" height="2" fill="#000"/><rect x="1123.7" y="344.0" width="2" height="2" fill="#000"/><rect x="319.7" y="402.0" width="2" height="2" fill="#000"/><rect x="319.7" y="431.0" width="2" height="2" fill="#000"/><rect x="305.9" y="460.0" width="2" height="2" fill="#000"/><rect x="313.9" y="460.0" width="2" height="2" fill="#000"/><rect x="321.9" y="460.0" width="2" height="2" fill="#000"/><rect x="329.9" y="460.0" width="2" height="2" fill="#000"/><rect x="379.0" y="460.0" width="2" height="2" fill="#000"/><rect x="387.0" y="460.0" width="2" height="2" fill="#000"/><rect x="395.0" y="460.0" width="2" height="2" fill="#000"/><rect x="452.1" y="460.0" width="2" height="2" fill="#000"/><rect x="460.1" y="460.0" width="2" height="2" fill="#000"/><rect x="468.1" y="460.0" width="2" height="2" fill="#000"/><rect x="525.2" y="460.0" width="2" height="2" fill="#000"/><rect x="533.2" y="460.0" width="2" height="2" fill="#000"/><rect x="541.2" y="460.0" width="2" height="2" fill="#000"/><rect x="598.3" y="460.0" width="2" height="2" fill="#000"/><rect x="606.3" y="460.0" width="2" height="2" fill="#000"/><rect x="614.3" y="460.0" width="2" height="2" fill="#000"/><rect x="671.4" y="460.0" width="2" height="2" fill="#000"/><rect x="679.4" y="460.0" width="2" height="2" fill="#000"/><rect x="687.4" y="460.0" width="2" height="2" fill="#000"/><rect x="744.5" y="460.0" width="2" height="2" fill="#000"/><rect x="752.5" y="460.0" width="2" height="2" fill="#000"/><rect x="760.5" y="460.0" width="2" height="2" fill="#000"/><rect x="817.6" y="460.0" width="2" height="2" fill="#000"/><rect x="825.6" y="460.0" width="2" height="2" fill="#000"/><rect x="833.6" y="460.0" width="2" height="2" fill="#000"/><rect x="890.7" y="460.0" width="2" height="2" fill="#000"/><rect x="898.7" y="460.0" width="2" height="2" fill="#000"/><rect x="906.7" y="460.0" width="2" height="2" fill="#000"/><rect x="1000.3" y="460.0" width="2" height="2" fill="#000"/><rect x="1008.3" y="460.0" width="2" height="2" fill="#000"/><rect x="1016.3" y="460.0" width="2" height="2" fill="#000"/><rect x="1219.6" y="460.0" width="2" height="2" fill="#000"/><rect x="648.7" y="489.0" width="2" height="2" fill="#000"/><rect x="1233.4" y="489.0" width="2" height="2" fill="#000"/><rect x="319.7" y="518.0" width="2" height="2" fill="#000"/><rect x="1123.7" y="518.0" width="2" height="2" fill="#000"/><rect x="285" y="563" width="1102" height="1" fill="#e8e8e8"/><rect x="1014" y="103" width="2" height="460" fill="#0a84ff"/><rect x="1088" y="103" width="2" height="460" fill="#0a84ff"/><rect x="1014.5" y="103.5" width="94" height="17" fill="#0a84ff" stroke="#fff" stroke-width="1"/><svg x="1014" y="103" width="73.5" height="18" overflow="hidden"><g transform="translate(-1014,-103)"><text x="1016.2" y="116" font-family="Liberation Mono" font-weight="bold" font-size="13.3" filter="url(#gs)" fill="#000">100.000 ns</text><rect x="1027.2" y="111.0" width="2" height="2" fill="#0a84ff"/><rect x="1035.2" y="111.0" width="2" height="2" fill="#0a84ff"/><rect x="1051.2" y="111.0" width="2" height="2" fill="#0a84ff"/><rect x="1059.2" y="111.0" width="2" height="2" fill="#0a84ff"/><rect x="1067.2" y="111.0" width="2" height="2" fill="#0a84ff"/></g></svg><rect x="1088.5" y="103.5" width="94" height="17" fill="#0a84ff" stroke="#fff" stroke-width="1"/><text x="1090.2" y="116" font-family="Liberation Mono" font-weight="bold" font-size="13.3" filter="url(#gs)" fill="#000">110.000 ns</text><rect x="1109.2" y="111.0" width="2" height="2" fill="#0a84ff"/><rect x="1125.2" y="111.0" width="2" height="2" fill="#0a84ff"/><rect x="1133.2" y="111.0" width="2" height="2" fill="#0a84ff"/><rect x="1141.2" y="111.0" width="2" height="2" fill="#0a84ff"/><rect x="1380" y="86" width="2" height="477" fill="#ffff00"/><rect x="1287.5" y="85.5" width="94" height="15" fill="#ffff00" stroke="#fff" stroke-width="1"/><text x="1289.5" y="97" font-family="Liberation Mono" font-weight="bold" font-size="13.3" filter="url(#gs)" fill="#000">150.000 ns</text><rect x="1308.5" y="92.0" width="2" height="2" fill="#ffff00"/><rect x="1324.5" y="92.0" width="2" height="2" fill="#ffff00"/><rect x="1332.5" y="92.0" width="2" height="2" fill="#ffff00"/><rect x="1340.5" y="92.0" width="2" height="2" fill="#ffff00"/></svg></svg></body></html>
